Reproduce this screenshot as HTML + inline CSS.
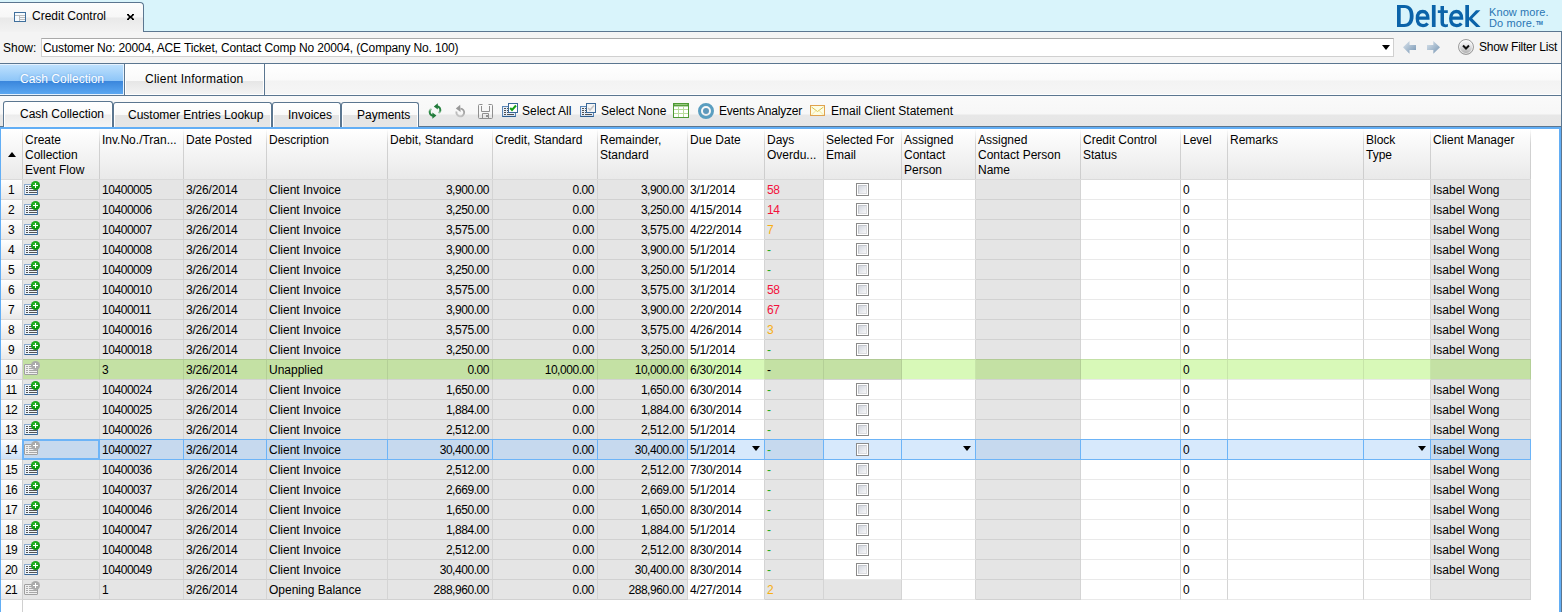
<!DOCTYPE html><html><head><meta charset="utf-8"><style>*,*:before,*:after{box-sizing:border-box}
html,body{margin:0;padding:0}
body{width:1562px;height:612px;overflow:hidden;position:relative;background:#fff;font-family:"Liberation Sans",sans-serif;font-size:12px;color:#000}
.abs{position:absolute}
#topbar{position:absolute;left:0;top:0;width:1562px;height:32px;background:#d9f4fb;border-bottom:1px solid #5b7690}
#tab1{position:absolute;left:0;top:2px;width:144px;height:30px;border-top:1px solid #5b7690;border-right:1px solid #5b7690;border-top-right-radius:4px;background:linear-gradient(#fdfdfd 0,#f7f7f7 14px,#e9e9e9 15px,#f2f2f2 29px)}
#tab1 .t{position:absolute;left:32px;top:6px;line-height:14px}
#tab1 .x{position:absolute;left:126px;top:12px;width:9px;height:9px}
#tab1 .wi{position:absolute;left:14px;top:12px;width:13px;height:10px;border:1px solid #4d6f91;background:#fff}
#deltek{position:absolute;left:1396px;top:2px;font-size:30px;font-weight:normal;-webkit-text-stroke:0.9px #0b64a8;color:#0b64a8;letter-spacing:-0.4px;line-height:30px}
#tag{position:absolute;left:1489px;top:7px;font-size:11px;color:#2a76b4;line-height:11px;letter-spacing:0.1px}
#showbar{position:absolute;left:0;top:32px;width:1562px;height:32px;background:#f4f4f4;border-bottom:1px solid #5b7690;border-right:1px solid #5b7690}
#showlbl{position:absolute;left:3px;top:9px;line-height:14px}
#combo{position:absolute;left:41px;top:6px;width:1353px;height:19px;background:#fff;border:1px solid #d0d0d0;border-top-color:#a9a9a9}
#combo .t{position:absolute;left:1px;top:2px;line-height:15px;letter-spacing:-0.15px}
#combo .arr{position:absolute;left:1340px;top:6px;width:0;height:0;border-left:4px solid transparent;border-right:4px solid transparent;border-top:5px solid #000}
#filtbtn{position:absolute;left:1458px;top:7px;width:16px;height:16px;border-radius:50%;background:linear-gradient(#fbfbfc,#e2e2e4 45%,#a9a9a9);border:1px solid #9c9c9c;box-shadow:inset 0 0 0 1px rgba(255,255,255,0.6)}
#filtlbl{position:absolute;left:1479px;top:8px;line-height:14px;letter-spacing:-0.25px}
#maintabs{position:absolute;left:0;top:64px;width:1562px;height:32px;background:linear-gradient(#ffffff 0,#fafafa 16px,#f3f3f3 17px,#f6f6f6 30px,#ffffff 30px);border-bottom:1px solid #5b7690;border-right:1px solid #5b7690}
#mt1{position:absolute;left:0;top:0;width:125px;height:31px;border-right:1px solid #5b7690;background:linear-gradient(#e6f2fe 0,#e6f2fe 1px,#bde0fd 1px,#8dc5f8 17px,#3a86dc 17px,#5ba7f1 30px,#e6f2fe 30px);box-shadow:inset -1px 0 0 #e6f2fe;color:#fafdff}
#mt1 .t{position:absolute;left:20px;top:8px;line-height:14px;color:#fff;text-shadow:0 0 2px rgba(40,110,200,0.5)}
#mt2{position:absolute;left:125px;top:0;width:140px;height:31px;border-right:1px solid #5b7690;box-shadow:inset 1px 1px 0 #fff,inset -1px -1px 0 #fff;background:linear-gradient(#ffffff 0,#f9f9f9 17px,#e6e6e6 17px,#f3f3f3 30px)}
#mt2 .t{position:absolute;left:20px;top:8px;letter-spacing:0.25px;line-height:14px}
#subbar{position:absolute;left:0;top:96px;width:1562px;height:31px;background:linear-gradient(#fafafa 0,#f7f7f7 18px,#e7e7e7 19px,#e6e6e6 29px);border-bottom:1px solid #5b7690;border-right:1px solid #5b7690}
.st{position:absolute;top:6px;height:25px;border:1px solid #5b7690;border-bottom:none;border-radius:3px 3px 0 0;background:linear-gradient(#ffffff 0,#f9f9f9 12px,#e4e4e4 12px,#e6e6e6 23px);box-shadow:inset 1px 1px 0 #fff,inset -1px 0 0 #fff}
.st .t{position:absolute;top:5px;line-height:14px;white-space:nowrap}
.st.act{top:5px;height:26px;background:linear-gradient(#ffffff 0,#fbfbfb 12px,#ececec 13px,#f5f5f5 25px);z-index:2}
.tb{position:absolute;top:8px;line-height:14px;white-space:nowrap}
#grid{position:absolute;left:0;top:127px;width:1561px;height:485px;border-top:2px solid #62aef5;border-left:1px solid #62aef5;border-right:2px solid #62aef5;background:#fff}
#gridwrap{}
.hc{position:absolute;background:linear-gradient(#ffffff,#e9e9e9);border-bottom:1px solid #dadada}
.hc:after{content:'';position:absolute;right:0;top:0;width:1px;height:50px;background:linear-gradient(rgba(208,208,208,0),#d2d2d2 30%,#cdcdcd)}
.ht{position:absolute;left:2px;top:4px;line-height:15px;white-space:nowrap}
.sortarrow{position:absolute;left:7px;top:23px;width:0;height:0;border-left:4px solid transparent;border-right:4px solid transparent;border-bottom:5px solid #000}
.rhc{position:absolute;left:1px;width:22px;height:20px;background:linear-gradient(#ffffff,#e9e9e9);border-right:1px solid #d0d0d0;border-bottom:1px solid #d8d8d8;text-align:center;line-height:20px;padding-right:1px}
.c{position:absolute;height:20px;border-right:1px solid #d4d4d4;border-bottom:1px solid rgba(0,0,0,0.085);line-height:21px;padding-left:2px;white-space:nowrap;overflow:hidden}
.c.ar{text-align:right;padding-right:3px;padding-left:0}
.gc{background:#e5e5e5}
.wc{background:#fff}
.gc.green{background:#c4e1a4}
.wc.green{background:#d8f9b8}
.gc.sel{background:#c6d9ee}
.wc.sel{background:#d7e9fc}
.c.sel{top:439px !important;height:21px;border-top:1px solid #6db4f7;border-bottom:1px solid #6db4f7;border-right:1px solid #6db4f7}
.rhc.sel{background:linear-gradient(#ffffff,#cde0f5)}
#focus{position:absolute;left:22px;top:439px;width:78px;height:21px;border:2px solid #6db4f7;z-index:3}
.cb{position:absolute;left:32px;top:3px;width:13px;height:13px;border:1px solid #8a8a8a;background:#fff}
.cb:after{content:"";position:absolute;left:1px;top:1px;width:9px;height:9px;background:linear-gradient(135deg,#d2d6de,#f6f6f8);border:1px solid #c4c7cd;border-right-color:#dcdde0;border-bottom-color:#dcdde0}
.dd{position:absolute;right:4px;top:6px;width:0;height:0;border-left:4px solid transparent;border-right:4px solid transparent;border-top:5px solid #000}
.ico{position:absolute;left:1px;top:1px;width:17px;height:16px}
.ico .doc{position:absolute;left:0;top:3px;width:14px;height:11px;border:1px solid #88a8cc;border-bottom-color:#3a6898;border-right-color:#4a76a4;border-radius:1px;background:#eef4fa}
.ico .doc i{position:absolute;left:1px;height:1px;width:2px;background:#555}.ico .doc i:after{content:'';position:absolute;left:3px;top:0;width:8px;height:1px;background:#555}
.ico .doc i:nth-child(1){top:1px}.ico .doc i:nth-child(2){top:3px}.ico .doc i:nth-child(3){top:5px}.ico .doc i:nth-child(4){top:7px}
.ico .plus{position:absolute;left:7px;top:0;width:9px;height:9px;border-radius:50%;background:radial-gradient(circle at 45% 35%,#30c030,#0c960c 60%,#0a800a)}
.ico .plus:before{content:"";position:absolute;left:2px;top:4px;width:5px;height:1px;background:#fff}
.ico .plus:after{content:"";position:absolute;left:4px;top:2px;width:1px;height:5px;background:#fff}
.ico.g .doc{border-color:#a0a0a0;background:#efefef}
.ico.g .doc i,.ico.g .doc i:after{background:#a8a8a8}
.ico.g .plus{background:#aaaaaa}

.num{letter-spacing:-0.45px}.dt{letter-spacing:-0.2px}.rhc{letter-spacing:-0.7px}

#rhfill{position:absolute;left:1px;top:600px;width:22px;height:12px;border-right:1px solid #d0d0d0}
#rslate{position:absolute;left:1561px;top:31px;width:1px;height:581px;background:#5b7690;z-index:5}
.c.green{top:359px !important;height:21px;border-top:1px solid rgba(0,0,0,0.09);border-right-color:rgba(0,0,0,0.08)}
.c.gc.green{border-bottom-color:#d2d2d2}
.c.wc.green{border-bottom-color:#e9e9e9}
</style></head><body>
<div id="topbar"></div>
<div id="tab1"><svg class="abs" style="left:14px;top:9px" width="12" height="10" viewBox="0 0 12 10"><rect x="0.5" y="0.5" width="11" height="9" fill="#f6fbff" stroke="#3f6f9c"/><path d="M1 3.5H11M5.5 3V9M6 5.5H11M6 7.5H11" stroke="#bdbdbd" stroke-width="1"/></svg><div class="t">Credit Control</div>
<svg class="abs" style="left:127px;top:11px" width="7" height="6" viewBox="0 0 7 6"><path d="M0.8 0.8L6.2 5.2M6.2 0.8L0.8 5.2" stroke="#000" stroke-width="1.7"/><path d="M0 0.5H2M5 0.5H7M0 5.5H2M5 5.5H7" stroke="#000" stroke-width="1"/></svg></div>
<svg class="abs" style="left:1397px;top:5px" width="84" height="23" viewBox="0 0 84 23">
<g fill="#0b63a9">
<path fill-rule="evenodd" d="M0 0H7.2C13.6 0 16.6 4.2 16.6 11C16.6 17.8 13.6 22 7.2 22H0Z M3.7 3.1H6.9C11 3.1 12.8 5.7 12.8 11C12.8 16.3 11 18.9 6.9 18.9H3.7Z"/>
<rect x="34.9" y="0" width="3.7" height="22"/>
<rect x="68.3" y="0" width="3.7" height="22"/>
<path d="M71.5 13.2L79 5.2H83.4L75.2 13.6L83.6 22H79.2L71.5 14.6Z"/>
<path d="M43.5 1H47V5.2H50.8V7.9H47V17.2C47 18.8 47.6 19.4 49 19.4C49.7 19.4 50.3 19.3 50.9 19.1V21.8C50.2 22.1 49.2 22.2 48.3 22.2C44.9 22.2 43.5 20.7 43.5 17.6V7.9H40.8V5.2H43.5Z"/>
</g>
<g fill="none" stroke="#0b63a9" stroke-width="3.3">
<path d="M20.3 13.2H30.9C30.9 9 29 6.5 25.7 6.5C22.2 6.5 20.3 9.3 20.3 13.6C20.3 18 22.4 20.6 26 20.6C28.2 20.6 29.6 19.8 30.6 18.4"/>
<path d="M53.7 13.2H64.6C64.6 9 62.7 6.5 59.3 6.5C55.8 6.5 53.7 9.3 53.7 13.6C53.7 18 55.9 20.6 59.6 20.6C61.8 20.6 63.3 19.8 64.3 18.4"/>
</g>
</svg>
<div id="tag"><div>Know more.</div><div style="position:relative">Do more.<span style="position:absolute;left:47px;top:3px;font-size:5px;line-height:5px;font-weight:bold;letter-spacing:-0.3px">TM</span></div></div>
<div id="showbar">
<div id="showlbl">Show:</div>
<div id="combo"><div class="t">Customer No: 20004, ACE Ticket, Contact Comp No 20004, (Company No. 100)</div><div class="arr"></div></div>
<svg class="abs" style="left:1403px;top:9px" width="13" height="13" viewBox="0 0 13 13"><defs><linearGradient id="ag" x1="0" y1="0" x2="1" y2="1"><stop offset="0" stop-color="#dde6ee"/><stop offset="1" stop-color="#7594b2"/></linearGradient></defs><path d="M0 6.3L6.5 0V4H13V9H6.5V12.8Z" fill="url(#ag)"/></svg>
<svg class="abs" style="left:1427px;top:9px" width="13" height="13" viewBox="0 0 13 13"><defs><linearGradient id="ag2" x1="0" y1="0" x2="1" y2="1"><stop offset="0" stop-color="#dde6ee"/><stop offset="1" stop-color="#7594b2"/></linearGradient></defs><path d="M13 6.3L6.3 0V4H0V9H6.3V12.8Z" fill="url(#ag2)"/></svg>
<div id="filtbtn"></div>
<svg class="abs" style="left:1461px;top:12px" width="10" height="7" viewBox="0 0 10 7"><path d="M2 1.5L5 4.5L8 1.5" stroke="#111" stroke-width="2" fill="none"/></svg>
<div id="filtlbl">Show Filter List</div>
</div>
<div id="maintabs">
<div id="mt1"><div class="t">Cash Collection</div></div>
<div id="mt2"><div class="t">Client Information</div></div>
</div>
<div id="subbar">
<div class="st act" style="left:3px;width:110px"><div class="t" style="left:16px">Cash Collection</div></div>
<div class="st" style="left:113px;width:159px"><div class="t" style="left:14px">Customer Entries Lookup</div></div>
<div class="st" style="left:272px;width:69px"><div class="t" style="left:15px">Invoices</div></div>
<div class="st" style="left:341px;width:78px"><div class="t" style="left:15px">Payments</div></div>
<div class="tb" style="left:522px">Select All</div>
<div class="tb" style="left:601px">Select None</div>
<div class="tb" style="left:719px;letter-spacing:-0.2px">Events Analyzer</div>
<div class="tb" style="left:831px">Email Client Statement</div>
</div>
<svg class="abs" style="left:428px;top:103px" width="14" height="16" viewBox="0 0 14 16">
<defs><linearGradient id="rg1" gradientUnits="userSpaceOnUse" x1="9" y1="3" x2="10" y2="11"><stop offset="0" stop-color="#1f7a38"/><stop offset="0.6" stop-color="#2e8a46"/><stop offset="1" stop-color="#2e8a46" stop-opacity="0.15"/></linearGradient>
<linearGradient id="rg2" gradientUnits="userSpaceOnUse" x1="5" y1="13" x2="3.5" y2="5"><stop offset="0" stop-color="#1f7a38"/><stop offset="0.6" stop-color="#2e8a46"/><stop offset="1" stop-color="#2e8a46" stop-opacity="0.15"/></linearGradient></defs>
<path d="M9 3.3 A3.9 3.9 0 0 1 10.6 10.4" stroke="url(#rg1)" stroke-width="1.9" fill="none"/>
<path d="M5.8 3.4 L9.8 0.3 L9.8 6.5 Z" fill="#217a3a"/>
<path d="M5 12.7 A3.9 3.9 0 0 1 3.4 5.6" stroke="url(#rg2)" stroke-width="1.9" fill="none"/>
<path d="M8.4 12.6 L4.4 9.5 L4.4 15.7 Z" fill="#217a3a"/>
</svg>
<svg class="abs" style="left:455px;top:104px" width="11" height="14" viewBox="0 0 11 14">
<defs><linearGradient id="ug" gradientUnits="userSpaceOnUse" x1="6" y1="4" x2="2" y2="12"><stop offset="0" stop-color="#9a9a9a"/><stop offset="1" stop-color="#c8c8c8"/></linearGradient></defs>
<path d="M5.5 4.6 A3.9 3.9 0 1 1 1.5 7.5" stroke="url(#ug)" stroke-width="1.9" fill="none"/>
<path d="M0.8 4.4 L5.2 0.8 L5.6 8 Z" fill="#999"/>
</svg>
<svg class="abs" style="left:478px;top:104px" width="15" height="15" viewBox="0 0 15 15">
<path d="M4.5 0.5 H1.5 Q0.5 0.5 0.5 1.5 V13.5 Q0.5 14.5 1.5 14.5 H13.5 Q14.5 14.5 14.5 13.5 V1.5 Q14.5 0.5 13.5 0.5 H10.5" stroke="#8f8f8f" stroke-width="1" fill="none"/>
<path d="M3.5 2 V7.5 H11.5 V2" stroke="#8f8f8f" stroke-width="1" fill="none"/>
<path d="M4.5 14 V9.5 H10.5 V14" stroke="#8f8f8f" stroke-width="1" fill="none"/>
<rect x="8" y="11" width="2" height="2" fill="#8f8f8f"/>
</svg>
<svg class="abs" style="left:502px;top:103px" width="16" height="14" viewBox="0 0 16 14">
<rect x="0.5" y="3.5" width="13" height="10" fill="#e6eef8" stroke="#5a86b6"/>
<path d="M0.5 13.5 H13.5" stroke="#2d5e90" stroke-width="1.2"/>
<path d="M2 5.5H4M5 5.5H12M2 7.5H4M5 7.5H12M2 9.5H4M5 9.5H12M2 11.5H4M5 11.5H12" stroke="#505050" stroke-width="1"/>
<rect x="6.5" y="0.5" width="9" height="9" fill="#fff" stroke="#3a6898"/>
<path d="M8.2 5 L10 7 L14 2.5" stroke="#14a014" stroke-width="2" fill="none"/>
</svg>
<svg class="abs" style="left:580px;top:103px" width="16" height="14" viewBox="0 0 16 14">
<rect x="0.5" y="3.5" width="13" height="10" fill="#e6eef8" stroke="#5a86b6"/>
<path d="M0.5 13.5 H13.5" stroke="#2d5e90" stroke-width="1.2"/>
<path d="M2 5.5H4M5 5.5H12M2 7.5H4M5 7.5H12M2 9.5H4M5 9.5H12M2 11.5H4M5 11.5H12" stroke="#505050" stroke-width="1"/>
<rect x="6.5" y="0.5" width="9" height="9" fill="#f4f4f4" stroke="#3a6898"/>
<path d="M8.2 5 L10 7 L14 2.5" stroke="#c4c4c4" stroke-width="1.6" fill="none"/>
</svg>
<svg class="abs" style="left:673px;top:103px" width="16" height="15" viewBox="0 0 16 15">
<rect x="0.5" y="0.5" width="15" height="14" fill="#fff" stroke="#4e9a34"/>
<path d="M1 2.2 H15" stroke="#4e9a34" stroke-width="2.4"/>
<path d="M1.5 1.6 H14.5" stroke="#b6dca0" stroke-width="0.8"/>
<path d="M5.5 3.5 V14 M10.5 3.5 V14 M1 6.5 H15 M1 10.5 H15" stroke="#b8dc9c" stroke-width="1"/>
</svg>
<svg class="abs" style="left:698px;top:103px" width="16" height="16" viewBox="0 0 16 16">
<circle cx="8" cy="8" r="6.5" fill="none" stroke="#5a9ec0" stroke-width="3"/>
<circle cx="8" cy="8" r="3" fill="#5e98bb"/>
</svg>
<svg class="abs" style="left:810px;top:105px" width="15" height="11" viewBox="0 0 15 11">
<rect x="0.5" y="0.5" width="14" height="10" fill="#fdfde4" stroke="#e0a24e"/>
<path d="M1.5 2 L7.5 6.5 L13.5 2" stroke="#dcc552" stroke-width="1" fill="none"/>
<path d="M1.5 10 L6 5.5 M13.5 10 L9 5.5" stroke="#ece08a" stroke-width="0.8" fill="none"/>
</svg>

<div id="grid"></div>
<div class="hc rh" style="left:1px;top:129px;width:22px;height:51px"><div class="sortarrow"></div></div>
<div class="hc" style="left:23px;top:129px;width:77px;height:51px"><div class="ht">Create<br>Collection<br>Event Flow</div></div>
<div class="hc" style="left:100px;top:129px;width:84px;height:51px"><div class="ht">Inv.No./Tran...</div></div>
<div class="hc" style="left:184px;top:129px;width:83px;height:51px"><div class="ht">Date Posted</div></div>
<div class="hc" style="left:267px;top:129px;width:121px;height:51px"><div class="ht">Description</div></div>
<div class="hc" style="left:388px;top:129px;width:105px;height:51px"><div class="ht">Debit, Standard</div></div>
<div class="hc" style="left:493px;top:129px;width:105px;height:51px"><div class="ht">Credit, Standard</div></div>
<div class="hc" style="left:598px;top:129px;width:90px;height:51px"><div class="ht">Remainder,<br>Standard</div></div>
<div class="hc" style="left:688px;top:129px;width:77px;height:51px"><div class="ht">Due Date</div></div>
<div class="hc" style="left:765px;top:129px;width:59px;height:51px"><div class="ht">Days<br>Overdu...</div></div>
<div class="hc" style="left:824px;top:129px;width:78px;height:51px"><div class="ht">Selected For<br>Email</div></div>
<div class="hc" style="left:902px;top:129px;width:74px;height:51px"><div class="ht">Assigned<br>Contact<br>Person</div></div>
<div class="hc" style="left:976px;top:129px;width:105px;height:51px"><div class="ht">Assigned<br>Contact Person<br>Name</div></div>
<div class="hc" style="left:1081px;top:129px;width:100px;height:51px"><div class="ht">Credit Control<br>Status</div></div>
<div class="hc" style="left:1181px;top:129px;width:47px;height:51px"><div class="ht">Level</div></div>
<div class="hc" style="left:1228px;top:129px;width:136px;height:51px"><div class="ht">Remarks</div></div>
<div class="hc" style="left:1364px;top:129px;width:67px;height:51px"><div class="ht">Block<br>Type</div></div>
<div class="hc" style="left:1431px;top:129px;width:100px;height:51px"><div class="ht">Client Manager</div></div>
<div class="rhc" style="top:180px">1</div>
<div class="c gc" style="left:23px;top:180px;width:77px"><div class="ico"><div class="doc"><i></i><i></i><i></i><i></i></div><div class="plus"></div></div></div>
<div class="c gc num" style="left:100px;top:180px;width:84px">10400005</div>
<div class="c gc dt" style="left:184px;top:180px;width:83px">3/26/2014</div>
<div class="c gc" style="left:267px;top:180px;width:121px">Client Invoice</div>
<div class="c gc ar num" style="left:388px;top:180px;width:105px">3,900.00</div>
<div class="c gc ar num" style="left:493px;top:180px;width:105px">0.00</div>
<div class="c gc ar num" style="left:598px;top:180px;width:90px">3,900.00</div>
<div class="c wc dt" style="left:688px;top:180px;width:77px">3/1/2014</div>
<div class="c gc num" style="left:765px;top:180px;width:59px;color:#f3113c">58</div>
<div class="c wc" style="left:824px;top:180px;width:78px"><div class="cb"></div></div>
<div class="c wc" style="left:902px;top:180px;width:74px"></div>
<div class="c gc" style="left:976px;top:180px;width:105px"></div>
<div class="c wc" style="left:1081px;top:180px;width:100px"></div>
<div class="c wc num" style="left:1181px;top:180px;width:47px">0</div>
<div class="c wc" style="left:1228px;top:180px;width:136px"></div>
<div class="c wc" style="left:1364px;top:180px;width:67px"></div>
<div class="c gc" style="left:1431px;top:180px;width:100px">Isabel Wong</div>
<div class="rhc" style="top:200px">2</div>
<div class="c gc" style="left:23px;top:200px;width:77px"><div class="ico"><div class="doc"><i></i><i></i><i></i><i></i></div><div class="plus"></div></div></div>
<div class="c gc num" style="left:100px;top:200px;width:84px">10400006</div>
<div class="c gc dt" style="left:184px;top:200px;width:83px">3/26/2014</div>
<div class="c gc" style="left:267px;top:200px;width:121px">Client Invoice</div>
<div class="c gc ar num" style="left:388px;top:200px;width:105px">3,250.00</div>
<div class="c gc ar num" style="left:493px;top:200px;width:105px">0.00</div>
<div class="c gc ar num" style="left:598px;top:200px;width:90px">3,250.00</div>
<div class="c wc dt" style="left:688px;top:200px;width:77px">4/15/2014</div>
<div class="c gc num" style="left:765px;top:200px;width:59px;color:#f3113c">14</div>
<div class="c wc" style="left:824px;top:200px;width:78px"><div class="cb"></div></div>
<div class="c wc" style="left:902px;top:200px;width:74px"></div>
<div class="c gc" style="left:976px;top:200px;width:105px"></div>
<div class="c wc" style="left:1081px;top:200px;width:100px"></div>
<div class="c wc num" style="left:1181px;top:200px;width:47px">0</div>
<div class="c wc" style="left:1228px;top:200px;width:136px"></div>
<div class="c wc" style="left:1364px;top:200px;width:67px"></div>
<div class="c gc" style="left:1431px;top:200px;width:100px">Isabel Wong</div>
<div class="rhc" style="top:220px">3</div>
<div class="c gc" style="left:23px;top:220px;width:77px"><div class="ico"><div class="doc"><i></i><i></i><i></i><i></i></div><div class="plus"></div></div></div>
<div class="c gc num" style="left:100px;top:220px;width:84px">10400007</div>
<div class="c gc dt" style="left:184px;top:220px;width:83px">3/26/2014</div>
<div class="c gc" style="left:267px;top:220px;width:121px">Client Invoice</div>
<div class="c gc ar num" style="left:388px;top:220px;width:105px">3,575.00</div>
<div class="c gc ar num" style="left:493px;top:220px;width:105px">0.00</div>
<div class="c gc ar num" style="left:598px;top:220px;width:90px">3,575.00</div>
<div class="c wc dt" style="left:688px;top:220px;width:77px">4/22/2014</div>
<div class="c gc num" style="left:765px;top:220px;width:59px;color:#f7ae12">7</div>
<div class="c wc" style="left:824px;top:220px;width:78px"><div class="cb"></div></div>
<div class="c wc" style="left:902px;top:220px;width:74px"></div>
<div class="c gc" style="left:976px;top:220px;width:105px"></div>
<div class="c wc" style="left:1081px;top:220px;width:100px"></div>
<div class="c wc num" style="left:1181px;top:220px;width:47px">0</div>
<div class="c wc" style="left:1228px;top:220px;width:136px"></div>
<div class="c wc" style="left:1364px;top:220px;width:67px"></div>
<div class="c gc" style="left:1431px;top:220px;width:100px">Isabel Wong</div>
<div class="rhc" style="top:240px">4</div>
<div class="c gc" style="left:23px;top:240px;width:77px"><div class="ico"><div class="doc"><i></i><i></i><i></i><i></i></div><div class="plus"></div></div></div>
<div class="c gc num" style="left:100px;top:240px;width:84px">10400008</div>
<div class="c gc dt" style="left:184px;top:240px;width:83px">3/26/2014</div>
<div class="c gc" style="left:267px;top:240px;width:121px">Client Invoice</div>
<div class="c gc ar num" style="left:388px;top:240px;width:105px">3,900.00</div>
<div class="c gc ar num" style="left:493px;top:240px;width:105px">0.00</div>
<div class="c gc ar num" style="left:598px;top:240px;width:90px">3,900.00</div>
<div class="c wc dt" style="left:688px;top:240px;width:77px">5/1/2014</div>
<div class="c gc num" style="left:765px;top:240px;width:59px;color:#22aa22">-</div>
<div class="c wc" style="left:824px;top:240px;width:78px"><div class="cb"></div></div>
<div class="c wc" style="left:902px;top:240px;width:74px"></div>
<div class="c gc" style="left:976px;top:240px;width:105px"></div>
<div class="c wc" style="left:1081px;top:240px;width:100px"></div>
<div class="c wc num" style="left:1181px;top:240px;width:47px">0</div>
<div class="c wc" style="left:1228px;top:240px;width:136px"></div>
<div class="c wc" style="left:1364px;top:240px;width:67px"></div>
<div class="c gc" style="left:1431px;top:240px;width:100px">Isabel Wong</div>
<div class="rhc" style="top:260px">5</div>
<div class="c gc" style="left:23px;top:260px;width:77px"><div class="ico"><div class="doc"><i></i><i></i><i></i><i></i></div><div class="plus"></div></div></div>
<div class="c gc num" style="left:100px;top:260px;width:84px">10400009</div>
<div class="c gc dt" style="left:184px;top:260px;width:83px">3/26/2014</div>
<div class="c gc" style="left:267px;top:260px;width:121px">Client Invoice</div>
<div class="c gc ar num" style="left:388px;top:260px;width:105px">3,250.00</div>
<div class="c gc ar num" style="left:493px;top:260px;width:105px">0.00</div>
<div class="c gc ar num" style="left:598px;top:260px;width:90px">3,250.00</div>
<div class="c wc dt" style="left:688px;top:260px;width:77px">5/1/2014</div>
<div class="c gc num" style="left:765px;top:260px;width:59px;color:#22aa22">-</div>
<div class="c wc" style="left:824px;top:260px;width:78px"><div class="cb"></div></div>
<div class="c wc" style="left:902px;top:260px;width:74px"></div>
<div class="c gc" style="left:976px;top:260px;width:105px"></div>
<div class="c wc" style="left:1081px;top:260px;width:100px"></div>
<div class="c wc num" style="left:1181px;top:260px;width:47px">0</div>
<div class="c wc" style="left:1228px;top:260px;width:136px"></div>
<div class="c wc" style="left:1364px;top:260px;width:67px"></div>
<div class="c gc" style="left:1431px;top:260px;width:100px">Isabel Wong</div>
<div class="rhc" style="top:280px">6</div>
<div class="c gc" style="left:23px;top:280px;width:77px"><div class="ico"><div class="doc"><i></i><i></i><i></i><i></i></div><div class="plus"></div></div></div>
<div class="c gc num" style="left:100px;top:280px;width:84px">10400010</div>
<div class="c gc dt" style="left:184px;top:280px;width:83px">3/26/2014</div>
<div class="c gc" style="left:267px;top:280px;width:121px">Client Invoice</div>
<div class="c gc ar num" style="left:388px;top:280px;width:105px">3,575.00</div>
<div class="c gc ar num" style="left:493px;top:280px;width:105px">0.00</div>
<div class="c gc ar num" style="left:598px;top:280px;width:90px">3,575.00</div>
<div class="c wc dt" style="left:688px;top:280px;width:77px">3/1/2014</div>
<div class="c gc num" style="left:765px;top:280px;width:59px;color:#f3113c">58</div>
<div class="c wc" style="left:824px;top:280px;width:78px"><div class="cb"></div></div>
<div class="c wc" style="left:902px;top:280px;width:74px"></div>
<div class="c gc" style="left:976px;top:280px;width:105px"></div>
<div class="c wc" style="left:1081px;top:280px;width:100px"></div>
<div class="c wc num" style="left:1181px;top:280px;width:47px">0</div>
<div class="c wc" style="left:1228px;top:280px;width:136px"></div>
<div class="c wc" style="left:1364px;top:280px;width:67px"></div>
<div class="c gc" style="left:1431px;top:280px;width:100px">Isabel Wong</div>
<div class="rhc" style="top:300px">7</div>
<div class="c gc" style="left:23px;top:300px;width:77px"><div class="ico"><div class="doc"><i></i><i></i><i></i><i></i></div><div class="plus"></div></div></div>
<div class="c gc num" style="left:100px;top:300px;width:84px">10400011</div>
<div class="c gc dt" style="left:184px;top:300px;width:83px">3/26/2014</div>
<div class="c gc" style="left:267px;top:300px;width:121px">Client Invoice</div>
<div class="c gc ar num" style="left:388px;top:300px;width:105px">3,900.00</div>
<div class="c gc ar num" style="left:493px;top:300px;width:105px">0.00</div>
<div class="c gc ar num" style="left:598px;top:300px;width:90px">3,900.00</div>
<div class="c wc dt" style="left:688px;top:300px;width:77px">2/20/2014</div>
<div class="c gc num" style="left:765px;top:300px;width:59px;color:#f3113c">67</div>
<div class="c wc" style="left:824px;top:300px;width:78px"><div class="cb"></div></div>
<div class="c wc" style="left:902px;top:300px;width:74px"></div>
<div class="c gc" style="left:976px;top:300px;width:105px"></div>
<div class="c wc" style="left:1081px;top:300px;width:100px"></div>
<div class="c wc num" style="left:1181px;top:300px;width:47px">0</div>
<div class="c wc" style="left:1228px;top:300px;width:136px"></div>
<div class="c wc" style="left:1364px;top:300px;width:67px"></div>
<div class="c gc" style="left:1431px;top:300px;width:100px">Isabel Wong</div>
<div class="rhc" style="top:320px">8</div>
<div class="c gc" style="left:23px;top:320px;width:77px"><div class="ico"><div class="doc"><i></i><i></i><i></i><i></i></div><div class="plus"></div></div></div>
<div class="c gc num" style="left:100px;top:320px;width:84px">10400016</div>
<div class="c gc dt" style="left:184px;top:320px;width:83px">3/26/2014</div>
<div class="c gc" style="left:267px;top:320px;width:121px">Client Invoice</div>
<div class="c gc ar num" style="left:388px;top:320px;width:105px">3,575.00</div>
<div class="c gc ar num" style="left:493px;top:320px;width:105px">0.00</div>
<div class="c gc ar num" style="left:598px;top:320px;width:90px">3,575.00</div>
<div class="c wc dt" style="left:688px;top:320px;width:77px">4/26/2014</div>
<div class="c gc num" style="left:765px;top:320px;width:59px;color:#f7ae12">3</div>
<div class="c wc" style="left:824px;top:320px;width:78px"><div class="cb"></div></div>
<div class="c wc" style="left:902px;top:320px;width:74px"></div>
<div class="c gc" style="left:976px;top:320px;width:105px"></div>
<div class="c wc" style="left:1081px;top:320px;width:100px"></div>
<div class="c wc num" style="left:1181px;top:320px;width:47px">0</div>
<div class="c wc" style="left:1228px;top:320px;width:136px"></div>
<div class="c wc" style="left:1364px;top:320px;width:67px"></div>
<div class="c gc" style="left:1431px;top:320px;width:100px">Isabel Wong</div>
<div class="rhc" style="top:340px">9</div>
<div class="c gc" style="left:23px;top:340px;width:77px"><div class="ico"><div class="doc"><i></i><i></i><i></i><i></i></div><div class="plus"></div></div></div>
<div class="c gc num" style="left:100px;top:340px;width:84px">10400018</div>
<div class="c gc dt" style="left:184px;top:340px;width:83px">3/26/2014</div>
<div class="c gc" style="left:267px;top:340px;width:121px">Client Invoice</div>
<div class="c gc ar num" style="left:388px;top:340px;width:105px">3,250.00</div>
<div class="c gc ar num" style="left:493px;top:340px;width:105px">0.00</div>
<div class="c gc ar num" style="left:598px;top:340px;width:90px">3,250.00</div>
<div class="c wc dt" style="left:688px;top:340px;width:77px">5/1/2014</div>
<div class="c gc num" style="left:765px;top:340px;width:59px;color:#22aa22">-</div>
<div class="c wc" style="left:824px;top:340px;width:78px"><div class="cb"></div></div>
<div class="c wc" style="left:902px;top:340px;width:74px"></div>
<div class="c gc" style="left:976px;top:340px;width:105px"></div>
<div class="c wc" style="left:1081px;top:340px;width:100px"></div>
<div class="c wc num" style="left:1181px;top:340px;width:47px">0</div>
<div class="c wc" style="left:1228px;top:340px;width:136px"></div>
<div class="c wc" style="left:1364px;top:340px;width:67px"></div>
<div class="c gc" style="left:1431px;top:340px;width:100px">Isabel Wong</div>
<div class="rhc green" style="top:360px">10</div>
<div class="c gc green" style="left:23px;top:360px;width:77px"><div class="ico g"><div class="doc"><i></i><i></i><i></i><i></i></div><div class="plus"></div></div></div>
<div class="c gc green num" style="left:100px;top:360px;width:84px">3</div>
<div class="c gc green dt" style="left:184px;top:360px;width:83px">3/26/2014</div>
<div class="c gc green" style="left:267px;top:360px;width:121px">Unapplied</div>
<div class="c gc green ar num" style="left:388px;top:360px;width:105px">0.00</div>
<div class="c gc green ar num" style="left:493px;top:360px;width:105px">10,000.00</div>
<div class="c gc green ar num" style="left:598px;top:360px;width:90px">10,000.00</div>
<div class="c wc green dt" style="left:688px;top:360px;width:77px">6/30/2014</div>
<div class="c gc green num" style="left:765px;top:360px;width:59px;color:#000">-</div>
<div class="c gc green" style="left:824px;top:360px;width:78px"></div>
<div class="c wc green" style="left:902px;top:360px;width:74px"></div>
<div class="c gc green" style="left:976px;top:360px;width:105px"></div>
<div class="c wc green" style="left:1081px;top:360px;width:100px"></div>
<div class="c wc green num" style="left:1181px;top:360px;width:47px">0</div>
<div class="c wc green" style="left:1228px;top:360px;width:136px"></div>
<div class="c wc green" style="left:1364px;top:360px;width:67px"></div>
<div class="c gc green" style="left:1431px;top:360px;width:100px"></div>
<div class="rhc" style="top:380px">11</div>
<div class="c gc" style="left:23px;top:380px;width:77px"><div class="ico"><div class="doc"><i></i><i></i><i></i><i></i></div><div class="plus"></div></div></div>
<div class="c gc num" style="left:100px;top:380px;width:84px">10400024</div>
<div class="c gc dt" style="left:184px;top:380px;width:83px">3/26/2014</div>
<div class="c gc" style="left:267px;top:380px;width:121px">Client Invoice</div>
<div class="c gc ar num" style="left:388px;top:380px;width:105px">1,650.00</div>
<div class="c gc ar num" style="left:493px;top:380px;width:105px">0.00</div>
<div class="c gc ar num" style="left:598px;top:380px;width:90px">1,650.00</div>
<div class="c wc dt" style="left:688px;top:380px;width:77px">6/30/2014</div>
<div class="c gc num" style="left:765px;top:380px;width:59px;color:#22aa22">-</div>
<div class="c wc" style="left:824px;top:380px;width:78px"><div class="cb"></div></div>
<div class="c wc" style="left:902px;top:380px;width:74px"></div>
<div class="c gc" style="left:976px;top:380px;width:105px"></div>
<div class="c wc" style="left:1081px;top:380px;width:100px"></div>
<div class="c wc num" style="left:1181px;top:380px;width:47px">0</div>
<div class="c wc" style="left:1228px;top:380px;width:136px"></div>
<div class="c wc" style="left:1364px;top:380px;width:67px"></div>
<div class="c gc" style="left:1431px;top:380px;width:100px">Isabel Wong</div>
<div class="rhc" style="top:400px">12</div>
<div class="c gc" style="left:23px;top:400px;width:77px"><div class="ico"><div class="doc"><i></i><i></i><i></i><i></i></div><div class="plus"></div></div></div>
<div class="c gc num" style="left:100px;top:400px;width:84px">10400025</div>
<div class="c gc dt" style="left:184px;top:400px;width:83px">3/26/2014</div>
<div class="c gc" style="left:267px;top:400px;width:121px">Client Invoice</div>
<div class="c gc ar num" style="left:388px;top:400px;width:105px">1,884.00</div>
<div class="c gc ar num" style="left:493px;top:400px;width:105px">0.00</div>
<div class="c gc ar num" style="left:598px;top:400px;width:90px">1,884.00</div>
<div class="c wc dt" style="left:688px;top:400px;width:77px">6/30/2014</div>
<div class="c gc num" style="left:765px;top:400px;width:59px;color:#22aa22">-</div>
<div class="c wc" style="left:824px;top:400px;width:78px"><div class="cb"></div></div>
<div class="c wc" style="left:902px;top:400px;width:74px"></div>
<div class="c gc" style="left:976px;top:400px;width:105px"></div>
<div class="c wc" style="left:1081px;top:400px;width:100px"></div>
<div class="c wc num" style="left:1181px;top:400px;width:47px">0</div>
<div class="c wc" style="left:1228px;top:400px;width:136px"></div>
<div class="c wc" style="left:1364px;top:400px;width:67px"></div>
<div class="c gc" style="left:1431px;top:400px;width:100px">Isabel Wong</div>
<div class="rhc" style="top:420px">13</div>
<div class="c gc" style="left:23px;top:420px;width:77px"><div class="ico"><div class="doc"><i></i><i></i><i></i><i></i></div><div class="plus"></div></div></div>
<div class="c gc num" style="left:100px;top:420px;width:84px">10400026</div>
<div class="c gc dt" style="left:184px;top:420px;width:83px">3/26/2014</div>
<div class="c gc" style="left:267px;top:420px;width:121px">Client Invoice</div>
<div class="c gc ar num" style="left:388px;top:420px;width:105px">2,512.00</div>
<div class="c gc ar num" style="left:493px;top:420px;width:105px">0.00</div>
<div class="c gc ar num" style="left:598px;top:420px;width:90px">2,512.00</div>
<div class="c wc dt" style="left:688px;top:420px;width:77px">5/1/2014</div>
<div class="c gc num" style="left:765px;top:420px;width:59px;color:#22aa22">-</div>
<div class="c wc" style="left:824px;top:420px;width:78px"><div class="cb"></div></div>
<div class="c wc" style="left:902px;top:420px;width:74px"></div>
<div class="c gc" style="left:976px;top:420px;width:105px"></div>
<div class="c wc" style="left:1081px;top:420px;width:100px"></div>
<div class="c wc num" style="left:1181px;top:420px;width:47px">0</div>
<div class="c wc" style="left:1228px;top:420px;width:136px"></div>
<div class="c wc" style="left:1364px;top:420px;width:67px"></div>
<div class="c gc" style="left:1431px;top:420px;width:100px">Isabel Wong</div>
<div class="rhc sel" style="top:440px">14</div>
<div class="c gc sel" style="left:23px;top:440px;width:77px"><div class="ico g"><div class="doc"><i></i><i></i><i></i><i></i></div><div class="plus"></div></div></div>
<div class="c gc sel num" style="left:100px;top:440px;width:84px">10400027</div>
<div class="c gc sel dt" style="left:184px;top:440px;width:83px">3/26/2014</div>
<div class="c gc sel" style="left:267px;top:440px;width:121px">Client Invoice</div>
<div class="c gc sel ar num" style="left:388px;top:440px;width:105px">30,400.00</div>
<div class="c gc sel ar num" style="left:493px;top:440px;width:105px">0.00</div>
<div class="c gc sel ar num" style="left:598px;top:440px;width:90px">30,400.00</div>
<div class="c wc sel dt" style="left:688px;top:440px;width:77px">5/1/2014<div class="dd"></div></div>
<div class="c gc sel num" style="left:765px;top:440px;width:59px;color:#22aa22">-</div>
<div class="c wc sel" style="left:824px;top:440px;width:78px"><div class="cb"></div></div>
<div class="c wc sel" style="left:902px;top:440px;width:74px"><div class="dd"></div></div>
<div class="c gc sel" style="left:976px;top:440px;width:105px"></div>
<div class="c wc sel" style="left:1081px;top:440px;width:100px"></div>
<div class="c wc sel num" style="left:1181px;top:440px;width:47px">0</div>
<div class="c wc sel" style="left:1228px;top:440px;width:136px"></div>
<div class="c wc sel" style="left:1364px;top:440px;width:67px"><div class="dd"></div></div>
<div class="c gc sel" style="left:1431px;top:440px;width:100px">Isabel Wong</div>
<div class="rhc" style="top:460px">15</div>
<div class="c gc" style="left:23px;top:460px;width:77px"><div class="ico"><div class="doc"><i></i><i></i><i></i><i></i></div><div class="plus"></div></div></div>
<div class="c gc num" style="left:100px;top:460px;width:84px">10400036</div>
<div class="c gc dt" style="left:184px;top:460px;width:83px">3/26/2014</div>
<div class="c gc" style="left:267px;top:460px;width:121px">Client Invoice</div>
<div class="c gc ar num" style="left:388px;top:460px;width:105px">2,512.00</div>
<div class="c gc ar num" style="left:493px;top:460px;width:105px">0.00</div>
<div class="c gc ar num" style="left:598px;top:460px;width:90px">2,512.00</div>
<div class="c wc dt" style="left:688px;top:460px;width:77px">7/30/2014</div>
<div class="c gc num" style="left:765px;top:460px;width:59px;color:#22aa22">-</div>
<div class="c wc" style="left:824px;top:460px;width:78px"><div class="cb"></div></div>
<div class="c wc" style="left:902px;top:460px;width:74px"></div>
<div class="c gc" style="left:976px;top:460px;width:105px"></div>
<div class="c wc" style="left:1081px;top:460px;width:100px"></div>
<div class="c wc num" style="left:1181px;top:460px;width:47px">0</div>
<div class="c wc" style="left:1228px;top:460px;width:136px"></div>
<div class="c wc" style="left:1364px;top:460px;width:67px"></div>
<div class="c gc" style="left:1431px;top:460px;width:100px">Isabel Wong</div>
<div class="rhc" style="top:480px">16</div>
<div class="c gc" style="left:23px;top:480px;width:77px"><div class="ico"><div class="doc"><i></i><i></i><i></i><i></i></div><div class="plus"></div></div></div>
<div class="c gc num" style="left:100px;top:480px;width:84px">10400037</div>
<div class="c gc dt" style="left:184px;top:480px;width:83px">3/26/2014</div>
<div class="c gc" style="left:267px;top:480px;width:121px">Client Invoice</div>
<div class="c gc ar num" style="left:388px;top:480px;width:105px">2,669.00</div>
<div class="c gc ar num" style="left:493px;top:480px;width:105px">0.00</div>
<div class="c gc ar num" style="left:598px;top:480px;width:90px">2,669.00</div>
<div class="c wc dt" style="left:688px;top:480px;width:77px">5/1/2014</div>
<div class="c gc num" style="left:765px;top:480px;width:59px;color:#22aa22">-</div>
<div class="c wc" style="left:824px;top:480px;width:78px"><div class="cb"></div></div>
<div class="c wc" style="left:902px;top:480px;width:74px"></div>
<div class="c gc" style="left:976px;top:480px;width:105px"></div>
<div class="c wc" style="left:1081px;top:480px;width:100px"></div>
<div class="c wc num" style="left:1181px;top:480px;width:47px">0</div>
<div class="c wc" style="left:1228px;top:480px;width:136px"></div>
<div class="c wc" style="left:1364px;top:480px;width:67px"></div>
<div class="c gc" style="left:1431px;top:480px;width:100px">Isabel Wong</div>
<div class="rhc" style="top:500px">17</div>
<div class="c gc" style="left:23px;top:500px;width:77px"><div class="ico"><div class="doc"><i></i><i></i><i></i><i></i></div><div class="plus"></div></div></div>
<div class="c gc num" style="left:100px;top:500px;width:84px">10400046</div>
<div class="c gc dt" style="left:184px;top:500px;width:83px">3/26/2014</div>
<div class="c gc" style="left:267px;top:500px;width:121px">Client Invoice</div>
<div class="c gc ar num" style="left:388px;top:500px;width:105px">1,650.00</div>
<div class="c gc ar num" style="left:493px;top:500px;width:105px">0.00</div>
<div class="c gc ar num" style="left:598px;top:500px;width:90px">1,650.00</div>
<div class="c wc dt" style="left:688px;top:500px;width:77px">8/30/2014</div>
<div class="c gc num" style="left:765px;top:500px;width:59px;color:#22aa22">-</div>
<div class="c wc" style="left:824px;top:500px;width:78px"><div class="cb"></div></div>
<div class="c wc" style="left:902px;top:500px;width:74px"></div>
<div class="c gc" style="left:976px;top:500px;width:105px"></div>
<div class="c wc" style="left:1081px;top:500px;width:100px"></div>
<div class="c wc num" style="left:1181px;top:500px;width:47px">0</div>
<div class="c wc" style="left:1228px;top:500px;width:136px"></div>
<div class="c wc" style="left:1364px;top:500px;width:67px"></div>
<div class="c gc" style="left:1431px;top:500px;width:100px">Isabel Wong</div>
<div class="rhc" style="top:520px">18</div>
<div class="c gc" style="left:23px;top:520px;width:77px"><div class="ico"><div class="doc"><i></i><i></i><i></i><i></i></div><div class="plus"></div></div></div>
<div class="c gc num" style="left:100px;top:520px;width:84px">10400047</div>
<div class="c gc dt" style="left:184px;top:520px;width:83px">3/26/2014</div>
<div class="c gc" style="left:267px;top:520px;width:121px">Client Invoice</div>
<div class="c gc ar num" style="left:388px;top:520px;width:105px">1,884.00</div>
<div class="c gc ar num" style="left:493px;top:520px;width:105px">0.00</div>
<div class="c gc ar num" style="left:598px;top:520px;width:90px">1,884.00</div>
<div class="c wc dt" style="left:688px;top:520px;width:77px">5/1/2014</div>
<div class="c gc num" style="left:765px;top:520px;width:59px;color:#22aa22">-</div>
<div class="c wc" style="left:824px;top:520px;width:78px"><div class="cb"></div></div>
<div class="c wc" style="left:902px;top:520px;width:74px"></div>
<div class="c gc" style="left:976px;top:520px;width:105px"></div>
<div class="c wc" style="left:1081px;top:520px;width:100px"></div>
<div class="c wc num" style="left:1181px;top:520px;width:47px">0</div>
<div class="c wc" style="left:1228px;top:520px;width:136px"></div>
<div class="c wc" style="left:1364px;top:520px;width:67px"></div>
<div class="c gc" style="left:1431px;top:520px;width:100px">Isabel Wong</div>
<div class="rhc" style="top:540px">19</div>
<div class="c gc" style="left:23px;top:540px;width:77px"><div class="ico"><div class="doc"><i></i><i></i><i></i><i></i></div><div class="plus"></div></div></div>
<div class="c gc num" style="left:100px;top:540px;width:84px">10400048</div>
<div class="c gc dt" style="left:184px;top:540px;width:83px">3/26/2014</div>
<div class="c gc" style="left:267px;top:540px;width:121px">Client Invoice</div>
<div class="c gc ar num" style="left:388px;top:540px;width:105px">2,512.00</div>
<div class="c gc ar num" style="left:493px;top:540px;width:105px">0.00</div>
<div class="c gc ar num" style="left:598px;top:540px;width:90px">2,512.00</div>
<div class="c wc dt" style="left:688px;top:540px;width:77px">8/30/2014</div>
<div class="c gc num" style="left:765px;top:540px;width:59px;color:#22aa22">-</div>
<div class="c wc" style="left:824px;top:540px;width:78px"><div class="cb"></div></div>
<div class="c wc" style="left:902px;top:540px;width:74px"></div>
<div class="c gc" style="left:976px;top:540px;width:105px"></div>
<div class="c wc" style="left:1081px;top:540px;width:100px"></div>
<div class="c wc num" style="left:1181px;top:540px;width:47px">0</div>
<div class="c wc" style="left:1228px;top:540px;width:136px"></div>
<div class="c wc" style="left:1364px;top:540px;width:67px"></div>
<div class="c gc" style="left:1431px;top:540px;width:100px">Isabel Wong</div>
<div class="rhc" style="top:560px">20</div>
<div class="c gc" style="left:23px;top:560px;width:77px"><div class="ico"><div class="doc"><i></i><i></i><i></i><i></i></div><div class="plus"></div></div></div>
<div class="c gc num" style="left:100px;top:560px;width:84px">10400049</div>
<div class="c gc dt" style="left:184px;top:560px;width:83px">3/26/2014</div>
<div class="c gc" style="left:267px;top:560px;width:121px">Client Invoice</div>
<div class="c gc ar num" style="left:388px;top:560px;width:105px">30,400.00</div>
<div class="c gc ar num" style="left:493px;top:560px;width:105px">0.00</div>
<div class="c gc ar num" style="left:598px;top:560px;width:90px">30,400.00</div>
<div class="c wc dt" style="left:688px;top:560px;width:77px">8/30/2014</div>
<div class="c gc num" style="left:765px;top:560px;width:59px;color:#22aa22">-</div>
<div class="c wc" style="left:824px;top:560px;width:78px"><div class="cb"></div></div>
<div class="c wc" style="left:902px;top:560px;width:74px"></div>
<div class="c gc" style="left:976px;top:560px;width:105px"></div>
<div class="c wc" style="left:1081px;top:560px;width:100px"></div>
<div class="c wc num" style="left:1181px;top:560px;width:47px">0</div>
<div class="c wc" style="left:1228px;top:560px;width:136px"></div>
<div class="c wc" style="left:1364px;top:560px;width:67px"></div>
<div class="c gc" style="left:1431px;top:560px;width:100px">Isabel Wong</div>
<div class="rhc" style="top:580px">21</div>
<div class="c gc" style="left:23px;top:580px;width:77px"><div class="ico g"><div class="doc"><i></i><i></i><i></i><i></i></div><div class="plus"></div></div></div>
<div class="c gc num" style="left:100px;top:580px;width:84px">1</div>
<div class="c gc dt" style="left:184px;top:580px;width:83px">3/26/2014</div>
<div class="c gc" style="left:267px;top:580px;width:121px">Opening Balance</div>
<div class="c gc ar num" style="left:388px;top:580px;width:105px">288,960.00</div>
<div class="c gc ar num" style="left:493px;top:580px;width:105px">0.00</div>
<div class="c gc ar num" style="left:598px;top:580px;width:90px">288,960.00</div>
<div class="c wc dt" style="left:688px;top:580px;width:77px">4/27/2014</div>
<div class="c gc num" style="left:765px;top:580px;width:59px;color:#f7ae12">2</div>
<div class="c gc" style="left:824px;top:580px;width:78px"></div>
<div class="c wc" style="left:902px;top:580px;width:74px"></div>
<div class="c gc" style="left:976px;top:580px;width:105px"></div>
<div class="c wc" style="left:1081px;top:580px;width:100px"></div>
<div class="c wc num" style="left:1181px;top:580px;width:47px">0</div>
<div class="c wc" style="left:1228px;top:580px;width:136px"></div>
<div class="c wc" style="left:1364px;top:580px;width:67px"></div>
<div class="c gc" style="left:1431px;top:580px;width:100px"></div>
<div id="focus"></div><div id="rhfill"></div><div id="rslate"></div>
</body></html>
